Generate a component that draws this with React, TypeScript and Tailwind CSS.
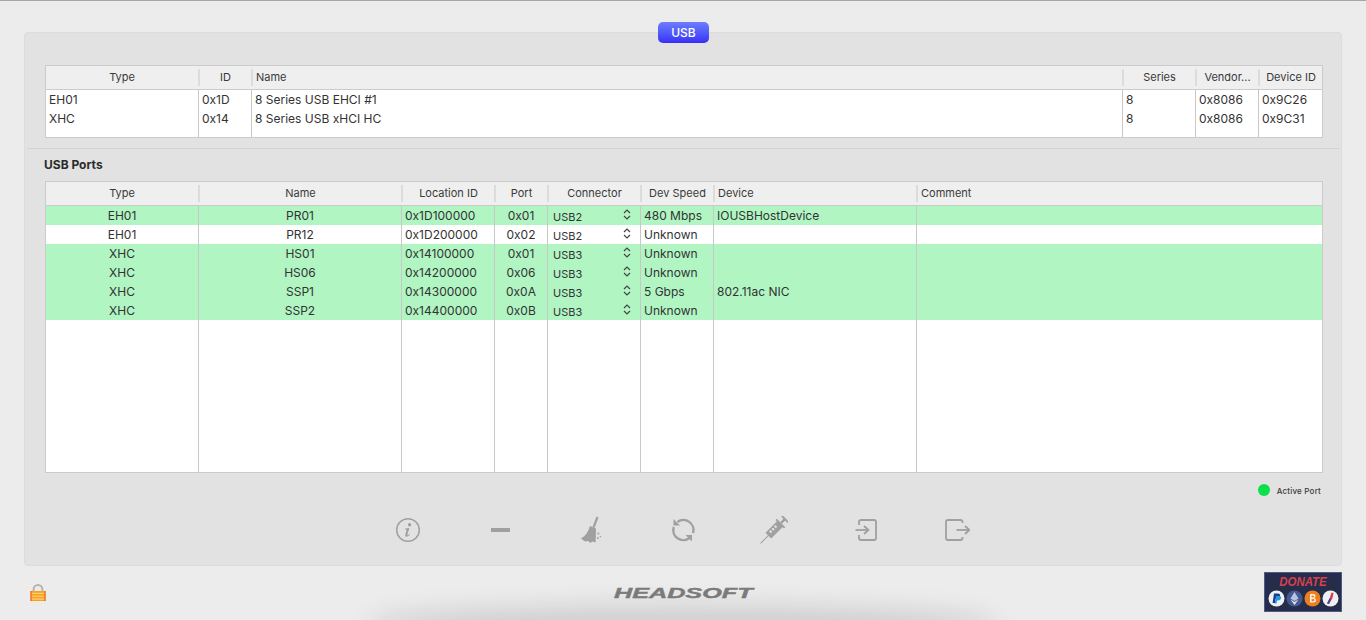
import type { ReactNode } from 'react';

const font = 'font-["Inter","Liberation_Sans",sans-serif]';

const busCols = 'grid-cols-[152px_53px_871px_73px_63px_minmax(0,1fr)]';
const portCols = 'grid-cols-[152px_203px_93px_53px_93px_73px_203px_minmax(0,1fr)]';

const busHead = [
  { label: 'Type', center: true },
  { label: 'ID', center: true },
  { label: 'Name' },
  { label: 'Series', center: true },
  { label: 'Vendor...', center: true },
  { label: 'Device ID', center: true },
];

const busRows = [
  ['EH01', '0x1D', '8 Series USB EHCI #1', '8', '0x8086', '0x9C26'],
  ['XHC', '0x14', '8 Series USB xHCI HC', '8', '0x8086', '0x9C31'],
];

const portHead = [
  { label: 'Type', center: true },
  { label: 'Name', center: true },
  { label: 'Location ID', center: true },
  { label: 'Port', center: true },
  { label: 'Connector', center: true },
  { label: 'Dev Speed', center: true },
  { label: 'Device' },
  { label: 'Comment' },
];

const portRows = [
  { type: 'EH01', name: 'PR01', loc: '0x1D100000', port: '0x01', conn: 'USB2', speed: '480 Mbps', device: 'IOUSBHostDevice', active: true },
  { type: 'EH01', name: 'PR12', loc: '0x1D200000', port: '0x02', conn: 'USB2', speed: 'Unknown', device: '', active: false },
  { type: 'XHC', name: 'HS01', loc: '0x14100000', port: '0x01', conn: 'USB3', speed: 'Unknown', device: '', active: true },
  { type: 'XHC', name: 'HS06', loc: '0x14200000', port: '0x06', conn: 'USB3', speed: 'Unknown', device: '', active: true },
  { type: 'XHC', name: 'SSP1', loc: '0x14300000', port: '0x0A', conn: 'USB3', speed: '5 Gbps', device: '802.11ac NIC', active: true },
  { type: 'XHC', name: 'SSP2', loc: '0x14400000', port: '0x0B', conn: 'USB3', speed: 'Unknown', device: '', active: true },
];

function HeadRow({ cols, items }: { cols: string; items: { label: string; center?: boolean }[] }) {
  return (
    <div className={`grid ${cols} h-6 items-center border-b border-[#cbcbcb] bg-[#efefef] text-[11px] text-[#3a3a3a]`}>
      {items.map((h, i) => (
        <div
          key={h.label}
          className={`flex h-[17px] items-center truncate px-[3px] ${i > 0 ? 'border-l-2 border-[#dcdcdc]' : ''} ${h.center ? 'justify-center' : ''}`}
        >
          {h.label}
        </div>
      ))}
    </div>
  );
}

function Cell({ children, center, line = true }: { children?: ReactNode; center?: boolean; line?: boolean }) {
  return (
    <div className={`flex h-full items-center truncate px-[3px] ${line ? 'border-l border-[#c8c8c8]' : ''} ${center ? 'justify-center' : ''}`}>
      {children}
    </div>
  );
}

function UpDown() {
  return (
    <svg width="8" height="11" viewBox="0 0 8 11" fill="none" stroke="#444" strokeWidth="1.2" className="mr-[6px] mb-[2px] ml-auto">
      <path d="M1 4 L4 1 L7 4" />
      <path d="M1 7 L4 10 L7 7" />
    </svg>
  );
}

function BusTable() {
  return (
    <div className="mt-[32px] mr-[18px] ml-5 h-[73px] border border-[#cbcbcb] bg-white">
      <HeadRow cols={busCols} items={busHead} />
      <div className={`grid ${busCols} h-[47px] grid-rows-[19px_19px_1fr] text-xs text-[#333]`}>
        {busRows.map((row) =>
          row.map((v, i) => (
            <Cell key={row[0] + i} line={i > 0}>{v}</Cell>
          )),
        )}
        {busRows[0].map((_, i) => (
          <Cell key={i} line={i > 0} />
        ))}
      </div>
    </div>
  );
}

function PortTable() {
  return (
    <div className="mt-[9px] mr-[18px] ml-5 flex h-[292px] flex-col border border-[#cbcbcb] bg-white">
      <HeadRow cols={portCols} items={portHead} />
      {portRows.map((r) => (
        <div key={r.name} className={`grid ${portCols} h-[19px] text-xs text-[#333] ${r.active ? 'bg-[#b1f5c3]' : 'bg-white'}`}>
          <Cell center line={false}>{r.type}</Cell>
          <Cell center>{r.name}</Cell>
          <Cell>{r.loc}</Cell>
          <Cell center>{r.port}</Cell>
          <Cell>
            <span className="mt-[3px] ml-[2px] text-[11px]">{r.conn}</span>
            <UpDown />
          </Cell>
          <Cell>{r.speed}</Cell>
          <Cell>{r.device}</Cell>
          <Cell />
        </div>
      ))}
      <div className={`grid ${portCols} min-h-0 flex-1`}>
        {portHead.map((h, i) => (
          <Cell key={h.label} line={i > 0} />
        ))}
      </div>
    </div>
  );
}

function Toolbar() {
  const stroke = '#a0a0a0';
  return (
    <div className="mt-[13px] flex h-[40px] items-center pl-[370px]">
      <div className="w-[96px]">
        <svg width="26" height="26" viewBox="0 0 26 26" fill="none">
          <circle cx="13" cy="13" r="11.3" stroke={stroke} strokeWidth="1.5" />
          <circle cx="14.6" cy="7.8" r="1.7" fill={stroke} />
          <path d="M10.3 11.6 L14.4 11 L12.4 17.6 C12.2 18.4 13 18.5 14.6 17 L15 17.6 C13.4 19.4 12.1 20 10.9 19.6 C10 19.3 10.1 18.3 10.4 17.3 L11.7 12.9 L10.3 12.7 Z" fill={stroke} />
        </svg>
      </div>
      <div className="w-[89px]">
        <div className="h-1 w-[19px] bg-[#a0a0a0]" />
      </div>
      <div className="w-[91px]">
        <svg width="22" height="28" viewBox="0 0 22 28" fill="none">
          <path d="M17.5 1 L13.5 11.5" stroke={stroke} strokeWidth="2.2" />
          <path d="M10 10 L16 12.4 L15.6 26.5 L12.4 25.4 L10.2 27 L8.2 25 L5 25.4 L1 22.6 Q7.5 19 10 10 Z" fill={stroke} />
          <circle cx="18.4" cy="17.6" r="1" fill={stroke} />
          <circle cx="20.4" cy="20.6" r="0.8" fill={stroke} />
          <circle cx="17.8" cy="22" r="0.9" fill={stroke} />
        </svg>
      </div>
      <div className="w-[89px]">
        <svg width="24" height="26" viewBox="0 0 24 26" fill="none">
          <path d="M6.5 5 A10 10 0 0 1 22 16" stroke={stroke} strokeWidth="2.4" />
          <path d="M18.5 21 A10 10 0 0 1 2.8 10" stroke={stroke} strokeWidth="2.4" />
          <path d="M2.5 2 L2.5 8.5 L9 8.5 Z" fill={stroke} />
          <path d="M21 24.5 L21 18 L14.5 18 Z" fill={stroke} />
        </svg>
      </div>
      <div className="w-[95px]">
        <svg width="28" height="28" viewBox="0 0 28 28" fill="none">
          <g transform="rotate(-45 14 14)">
            <path d="M-5 14 H7" stroke={stroke} strokeWidth="1" />
            <rect x="6" y="10" width="17" height="8" fill={stroke} />
            <rect x="9.5" y="11.5" width="2" height="2.5" fill="#e2e2e2" />
            <rect x="13" y="11.5" width="2" height="2.5" fill="#e2e2e2" />
            <rect x="16.5" y="11.5" width="2" height="2.5" fill="#e2e2e2" />
            <rect x="22" y="8" width="2" height="12" fill={stroke} />
            <rect x="24" y="12.8" width="5" height="2.4" fill={stroke} />
            <rect x="28.5" y="9.5" width="2" height="9" fill={stroke} />
          </g>
        </svg>
      </div>
      <div className="w-[90px]">
        <svg width="22" height="22" viewBox="0 0 22 22" fill="none" stroke={stroke} strokeWidth="1.8">
          <path d="M4 6 V3 Q4 1 6 1 H19 Q21 1 21 3 V19 Q21 21 19 21 H6 Q4 21 4 19 V16" />
          <path d="M0.5 11 H13" />
          <path d="M9 7 L13.5 11 L9 15" />
        </svg>
      </div>
      <svg width="25" height="22" viewBox="0 0 25 22" fill="none" stroke={stroke} strokeWidth="1.8">
        <path d="M17.5 4 V3 Q17.5 1 15.5 1 H3 Q1 1 1 3 V19 Q1 21 3 21 H15.5 Q17.5 21 17.5 19 V18" />
        <path d="M11.5 11 H24" />
        <path d="M20 7 L24.5 11 L20 15" />
      </svg>
    </div>
  );
}

function Lock() {
  return (
    <svg width="18" height="18" viewBox="0 0 18 18" fill="none">
      <path d="M4.6 8 V5.4 A4.4 4.4 0 0 1 13.4 5.4 V8" stroke="#b4b4b4" strokeWidth="2" />
      <rect x="1.5" y="7" width="15" height="10" fill="#fb9f1e" />
      <rect x="1.5" y="8.8" width="15" height="1.2" fill="#fdd27a" />
      <rect x="1.5" y="11.6" width="15" height="1.2" fill="#fdd27a" />
      <rect x="1.5" y="14.4" width="15" height="1.2" fill="#fdd27a" />
      <rect x="1.5" y="7" width="1" height="10" fill="#e2561b" />
      <rect x="15.5" y="7" width="1" height="10" fill="#e2561b" />
    </svg>
  );
}

function Donate() {
  return (
    <div className="flex h-[40px] w-[78px] flex-col items-center border border-[#4a5a8c] bg-[#262d4a]">
      <span className='mt-[1px] inline-block scale-x-[0.88] text-[13px] leading-[15px] font-bold text-[#d9404d] italic font-["Liberation_Sans",sans-serif]'>DONATE</span>
      <div className="mt-[1px] flex gap-[1px]">
        <svg width="17" height="17" viewBox="0 0 17 17">
          <circle cx="8.5" cy="8.5" r="8" fill="#eef0f4" />
          <path d="M6 3.5 H10 Q12.5 3.5 12 6 Q11.5 9 8.8 9 H7.6 L7 13 H4.6 Z" fill="#1a3d8f" />
          <path d="M8 6 H11 Q13.5 6 13 8.2 Q12.5 10.5 10 10.5 H9 L8.5 13.5 H6.8 Z" fill="#1f9bde" />
        </svg>
        <svg width="17" height="17" viewBox="0 0 17 17">
          <circle cx="8.5" cy="8.5" r="8" fill="#46598f" />
          <path d="M8.5 2 L12.5 8.6 L8.5 11 L4.5 8.6 Z" fill="#b7c3e6" />
          <path d="M8.5 12 L12.5 9.6 L8.5 15 L4.5 9.6 Z" fill="#dfe5f5" />
        </svg>
        <svg width="17" height="17" viewBox="0 0 17 17">
          <circle cx="8.5" cy="8.5" r="8" fill="#ee7f1f" />
          <path d="M6 4 H9.5 Q11.5 4 11.5 6 Q11.5 7.6 10 8 Q12 8.4 12 10.2 Q12 12.6 9.5 12.6 H6 Z M7.6 5.4 V7.6 H9.2 Q10 7.6 10 6.5 Q10 5.4 9.2 5.4 Z M7.6 8.9 V11.2 H9.4 Q10.4 11.2 10.4 10 Q10.4 8.9 9.4 8.9 Z" fill="#fff3e4" fillRule="evenodd" />
        </svg>
        <svg width="17" height="17" viewBox="0 0 17 17">
          <circle cx="8.5" cy="8.5" r="8" fill="#eef0f4" />
          <path d="M9.5 2.5 L11.5 3 L10.5 8 L7 14 L5 13.5 L7.8 8 Z" fill="#e03a3e" />
          <path d="M7 14 L5 13.5 L7.8 8 L9 9.5 Z" fill="#3b4aa8" />
        </svg>
      </div>
    </div>
  );
}

function Logo() {
  return (
    <span className='inline-block scale-x-[1.68] text-[15px] leading-[15px] font-bold text-[#7d7d7d] italic font-["Liberation_Sans",sans-serif] [-webkit-text-stroke:0.4px_#7d7d7d]'>
      HEADSOFT
    </span>
  );
}

export default function App() {
  return (
    <div className={`relative h-[620px] w-[1366px] overflow-hidden border-t border-[#a6a6a6] bg-[#ececec] ${font}`}>
      <div className="relative mx-6 mt-[31px] h-[534px] rounded border border-[#dcdcdc] bg-[#e2e2e2]">
        <div className="absolute top-[-11px] left-[633px] flex h-[21px] w-[51px] items-center justify-center rounded-[5px] bg-gradient-to-b from-[#6f7cff] to-[#3a2df5] text-xs font-medium text-white">
          USB
        </div>
        <BusTable />
        <div className="mx-[2px] mt-[10px] h-px bg-[#d2d2d2]" />
        <div className="mt-[8px] ml-[19px] text-xs leading-[15px] font-bold text-[#2a2a2a]">USB Ports</div>
        <PortTable />
        <div className="mt-[9px] flex items-center justify-end pr-[20px]">
          <span className="h-3 w-3 rounded-full bg-[#0ae04c]" />
          <span className="mt-[3px] ml-[7px] text-[8px] leading-3 font-medium tracking-[0.2px] text-[#3a3a3a]">Active Port</span>
        </div>
        <Toolbar />
      </div>
      <div className="relative grid h-[54px] grid-cols-[1fr_auto_1fr] items-start">
        <div className="mt-[18px] ml-[29px] flex">
          <Lock />
        </div>
        <div className="mt-[19px] flex">
          <Logo />
        </div>
        <div className="mt-[6px] mr-[24px] justify-self-end">
          <Donate />
        </div>
        <div className="absolute right-[380px] bottom-[-16px] left-[380px] h-[14px] rounded-[50%] shadow-[0_-4px_26px_12px_rgba(0,0,0,0.13)]" />
      </div>
    </div>
  );
}
